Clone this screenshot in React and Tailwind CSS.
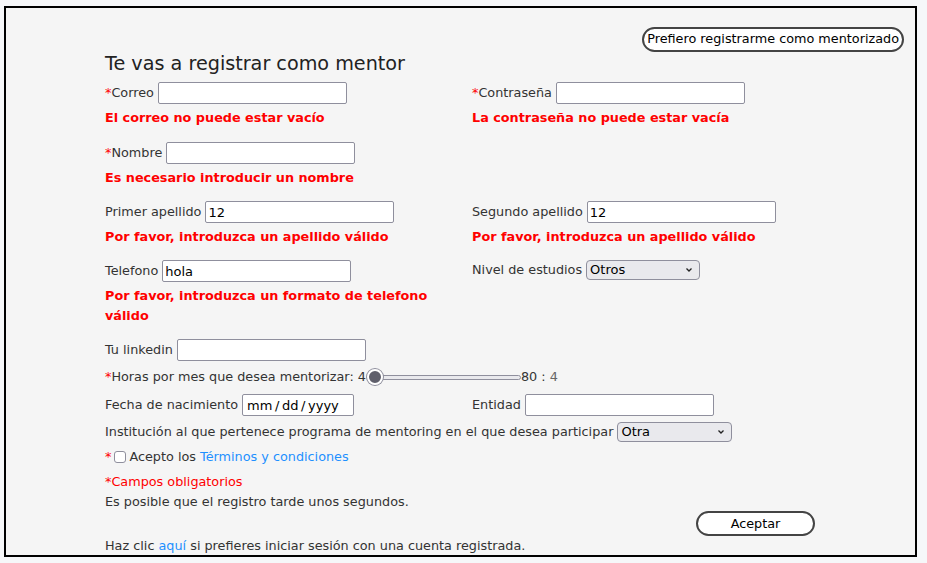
import React from "react";

const font = { fontFamily: '"DejaVu Sans", Verdana, sans-serif' };

function Field({ label, req, value, inputW = "w-[189px]" }) {
  return (
    <div className="flex items-center h-[22px]">
      <span className="whitespace-nowrap">
        {req && <span className="text-[#ff0000]">*</span>}
        {label}
      </span>
      <input
        readOnly
        value={value || ""}
        className={`ml-[4px] ${inputW} h-[22px] bg-white border border-[#8f8f9d] rounded-[2px] px-[2px] text-[13px] text-black outline-none`}
        style={font}
      />
    </div>
  );
}

function Err({ children }) {
  return (
    <div className="mt-[4px] font-bold text-[#ff0000] leading-[20px] pr-[10px]">{children}</div>
  );
}

function Select({ value, w }) {
  return (
    <div
      className={`ml-[4px] ${w} h-[20px] bg-[#e9e9ed] border border-[#8f8f9d] rounded-[4px] flex items-center justify-between pl-[3px] pr-[6px] text-[13px] text-black`}
    >
      <span>{value}</span>
      <svg width="8" height="6" viewBox="0 0 8 6">
        <path d="M1.5 1.5 L4 4 L6.5 1.5" fill="none" stroke="#222" strokeWidth="1.3" />
      </svg>
    </div>
  );
}

export default function App() {
  return (
    <div className="min-h-screen bg-[#f6f7f9] pt-[6px] pl-[4px] text-[12.8px] text-[#333]" style={font}>
      <div className="w-[913px] h-[551px] border-2 border-black bg-[#f5f5f5] flex flex-col">
        <div className="flex justify-end pr-[11px] pt-[19px]">
          <button className="h-[25px] px-[3px] border-2 border-[#444] rounded-full bg-white text-[12.8px] text-black leading-none">
            Prefiero registrarme como mentorizado
          </button>
        </div>
        <div className="pl-[99px]">
          <h1 className="text-[19.2px] leading-[24px] text-[#222] mt-[0px]">Te vas a registrar como mentor</h1>
          <div className="grid grid-cols-[367px_367px] mt-[6px]">
            <div>
              <Field label="Correo" req />
              <Err>El correo no puede estar vacío</Err>
            </div>
            <div>
              <Field label="Contraseña" req />
              <Err>La contraseña no puede estar vacía</Err>
            </div>
            <div className="mt-[14px]">
              <Field label="Nombre" req />
              <Err>Es necesario introducir un nombre</Err>
            </div>
            <div />
            <div className="mt-[13px]">
              <Field label="Primer apellido" value="12" />
              <Err>Por favor, introduzca un apellido válido</Err>
            </div>
            <div className="mt-[13px]">
              <Field label="Segundo apellido" value="12" />
              <Err>Por favor, introduzca un apellido válido</Err>
            </div>
            <div className="mt-[13px]">
              <Field label="Telefono" value="hola" />
              <Err>Por favor, introduzca un formato de telefono válido</Err>
            </div>
            <div className="mt-[13px]">
              <div className="flex items-center h-[20px]">
                <span>Nivel de estudios</span>
                <Select value="Otros" w="w-[114px]" />
              </div>
            </div>
          </div>
          <div className="mt-[13px]">
            <Field label="Tu linkedin" />
          </div>
          <div className="flex items-center h-[32px] mt-[0px]">
            <span>
              <span className="text-[#ff0000]">*</span>Horas por mes que desea mentorizar: 4
            </span>
            <div className="relative w-[154px] h-[16px] ml-[1px] flex items-center">
              <div className="w-full h-[5px] border border-[#8f8f9d] rounded-full bg-[#e9e9ed]" />
              <div className="absolute left-0 top-0 w-[16px] h-[16px] rounded-full bg-[#5f5f6b] border-2 border-white shadow-[0_0_0_1px_#8f8f9d]" />
            </div>
            <span>
              80 : <span className="text-[#666]">4</span>
            </span>
          </div>
          <div className="grid grid-cols-[367px_367px] mt-[1px]">
            <Field label="Fecha de nacimiento" value={"mm\u2009/\u2009dd\u2009/\u2009yyyy"} inputW="w-[112px] pl-[4px]" />
            <Field label="Entidad" />
          </div>
          <div className="flex items-center h-[22px] mt-[5px]">
            <span>Institución al que pertenece programa de mentoring en el que desea participar</span>
            <Select value="Otra" w="w-[115px]" />
          </div>
          <div className="flex items-center h-[20px] mt-[4px]">
            <span className="text-[#ff0000]">*</span>
            <span className="ml-[3px] w-[12px] h-[12px] border border-[#8f8f9d] rounded-[3px] bg-white inline-block" />
            <span className="ml-[3px]">
              Acepto los <span className="text-[#1e90ff]">Términos y condiciones</span>
            </span>
          </div>
          <div className="mt-[5px] leading-[20px] text-[#ff0000]">*Campos obligatorios</div>
          <div className="leading-[20px]">Es posible que el registro tarde unos segundos.</div>
          <div className="flex mt-[-1px]">
            <button className="ml-[591px] w-[119px] h-[25px] border-2 border-[#444] rounded-full bg-white text-[12.8px] text-black">
              Aceptar
            </button>
          </div>
          <div className="leading-[20px]">
            Haz clic <span className="text-[#1e90ff]">aquí</span> si prefieres iniciar sesión con una cuenta registrada.
          </div>
        </div>
      </div>
    </div>
  );
}
